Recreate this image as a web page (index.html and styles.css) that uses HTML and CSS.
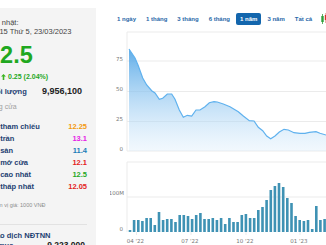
FILE: index.html
```html
<!DOCTYPE html>
<html lang="vi">
<head>
  <meta charset="UTF-8">
  <title>Cổ phiếu</title>
  <link rel="stylesheet" href="styles.css">
</head>
<body>
  <div class="page">
    <aside class="quote">
      <div class="inner">
        <div class="updated">Cập nhật:</div>
        <div class="updated time">14:15 Thứ 5, 23/03/2023</div>

        <div class="price">12.5</div>
        <div class="change">
          <svg class="arrow" width="5" height="6" viewBox="0 0 5 6"><path d="M2.5 0 L5 2.6 L3.3 2.6 L3.3 6 L1.7 6 L1.7 2.6 L0 2.6 Z" fill="#3cb521"/></svg>
          <span>0.25 (2.04%)</span>
        </div>

        <div class="row volume"><span class="label">Khối lượng</span><span class="num">9,956,100</span></div>
        <div class="session">Đóng cửa</div>

        <div class="prices">
          <div class="row"><span class="label">Giá tham chiếu</span><span class="ref">12.25</span></div>
          <div class="row"><span class="label">Giá trần</span><span class="ceil">13.1</span></div>
          <div class="row"><span class="label">Giá sàn</span><span class="floor">11.4</span></div>
          <div class="row"><span class="label">Giá mở cửa</span><span class="down">12.1</span></div>
          <div class="row"><span class="label">Giá cao nhất</span><span class="up">12.5</span></div>
          <div class="row"><span class="label">Giá thấp nhất</span><span class="down">12.05</span></div>
        </div>

        <div class="unit">Đơn vị giá: 1000 VNĐ</div>

        <div class="foreign">
          <div class="title">Giao dịch NĐTNN</div>
          <div class="row"><span class="label">KL mua</span><span class="num">9,223,000</span></div>
        </div>
      </div>
    </aside>

    <section class="chart">
      <div class="tabs">
        <span class="tab">1 ngày</span>
        <span class="tab">1 tháng</span>
        <span class="tab">3 tháng</span>
        <span class="tab">6 tháng</span>
        <span class="tab active">1 năm</span>
        <span class="tab">3 năm</span>
        <span class="tab">Tất cả</span>
        <svg class="candle" width="10" height="12" viewBox="0 0 10 12">
          <line x1="1.5" y1="1" x2="1.5" y2="11" stroke="#2e9e3a" stroke-width="0.8"/>
          <rect x="0.3" y="3" width="2.4" height="6" fill="#2e9e3a"/>
          <line x1="5" y1="0" x2="5" y2="10" stroke="#d9302c" stroke-width="0.8"/>
          <rect x="3.8" y="2" width="2.4" height="5" fill="#d9302c"/>
          <line x1="8.5" y1="2" x2="8.5" y2="12" stroke="#2e9e3a" stroke-width="0.8"/>
          <rect x="7.3" y="4" width="2.4" height="6" fill="#2e9e3a"/>
        </svg>
      </div>

      <svg class="plot" width="216" height="215" viewBox="110 30 216 215">
        <defs>
          <linearGradient id="fill" x1="0" y1="0" x2="0" y2="1">
            <stop offset="0" stop-color="#4ea4e6" stop-opacity="0.9"/>
            <stop offset="1" stop-color="#d9ecfb" stop-opacity="0.35"/>
          </linearGradient>
        </defs>

        <!-- price -->
        <g class="grid">
          <line x1="127" y1="32" x2="326" y2="32"/>
          <line x1="127" y1="61" x2="326" y2="61"/>
          <line x1="127" y1="91.5" x2="326" y2="91.5"/>
          <line x1="127" y1="121.5" x2="326" y2="121.5"/>
          <line x1="127" y1="151" x2="326" y2="151"/>
          <line x1="127" y1="32" x2="127" y2="151"/>
        </g>
        <g class="axis" text-anchor="end">
          <text x="123" y="61">75</text>
          <text x="123" y="90.5">50</text>
          <text x="123" y="121">25</text>
          <text x="123" y="150.5">0</text>
        </g>
        <path fill="url(#fill)" d="M129,49 L135,58 L138,65 L142.7,78 L146.7,85 L151.7,90.7 L155,93 L159.3,99.3 L162.7,98.3 L167.3,94 L171.7,94 L175,99.3 L179.3,110 L183.3,117.3 L187.3,115.3 L191.7,116 L196,110 L200,110 L205,106.7 L209.3,102.7 L214,101.7 L217.3,102 L223.3,104 L230,106.7 L238.3,111.7 L243.3,116 L249.3,120.7 L254,121 L258.3,127.3 L262.7,130.7 L266.7,136 L270.7,138.7 L275,136 L279.3,132 L284,129.3 L288.3,130 L294,132.7 L300,133.3 L305,133.3 L309.3,132.3 L316,131.7 L320,133.3 L326,135 L326,151 L129,151 Z"/>
        <path class="line" d="M129,49 L135,58 L138,65 L142.7,78 L146.7,85 L151.7,90.7 L155,93 L159.3,99.3 L162.7,98.3 L167.3,94 L171.7,94 L175,99.3 L179.3,110 L183.3,117.3 L187.3,115.3 L191.7,116 L196,110 L200,110 L205,106.7 L209.3,102.7 L214,101.7 L217.3,102 L223.3,104 L230,106.7 L238.3,111.7 L243.3,116 L249.3,120.7 L254,121 L258.3,127.3 L262.7,130.7 L266.7,136 L270.7,138.7 L275,136 L279.3,132 L284,129.3 L288.3,130 L294,132.7 L300,133.3 L305,133.3 L309.3,132.3 L316,131.7 L320,133.3 L326,135"/>

        <!-- volume -->
        <g class="grid">
          <line x1="127" y1="162" x2="326" y2="162"/>
          <line x1="127" y1="197" x2="326" y2="197"/>
          <line x1="127" y1="162" x2="127" y2="232"/>
          <line x1="136.5" y1="232" x2="136.5" y2="235"/>
          <line x1="191" y1="232" x2="191" y2="235"/>
          <line x1="246" y1="232" x2="246" y2="235"/>
          <line x1="300" y1="232" x2="300" y2="235"/>
        </g>
        <g class="axis" text-anchor="end">
          <text x="124" y="195">100M</text>
          <text x="123" y="231">0</text>
        </g>
        <g class="axis" text-anchor="middle">
          <text x="135.5" y="243">04 '22</text>
          <text x="190" y="243">07 '22</text>
          <text x="245" y="243">10 '22</text>
          <text x="299" y="243">01 '23</text>
        </g>
        <g class="bars">
          <rect x="128.7" y="230" width="2.6" height="2"/>
          <rect x="132.8" y="220" width="2.6" height="12"/>
          <rect x="137.0" y="220" width="2.6" height="12"/>
          <rect x="141.1" y="221" width="2.6" height="11"/>
          <rect x="145.3" y="218" width="2.6" height="14"/>
          <rect x="149.4" y="218" width="2.6" height="14"/>
          <rect x="153.5" y="225" width="2.6" height="7"/>
          <rect x="157.7" y="212" width="2.6" height="20"/>
          <rect x="161.8" y="220" width="2.6" height="12"/>
          <rect x="165.9" y="219" width="2.6" height="13"/>
          <rect x="170.1" y="219" width="2.6" height="13"/>
          <rect x="174.2" y="222" width="2.6" height="10"/>
          <rect x="178.4" y="215" width="2.6" height="17"/>
          <rect x="182.5" y="215" width="2.6" height="17"/>
          <rect x="186.7" y="216" width="2.6" height="16"/>
          <rect x="190.8" y="219" width="2.6" height="13"/>
          <rect x="194.9" y="215" width="2.6" height="17"/>
          <rect x="199.1" y="213" width="2.6" height="19"/>
          <rect x="203.2" y="219" width="2.6" height="13"/>
          <rect x="207.4" y="219" width="2.6" height="13"/>
          <rect x="211.5" y="218" width="2.6" height="14"/>
          <rect x="215.6" y="220" width="2.6" height="12"/>
          <rect x="219.8" y="218" width="2.6" height="14"/>
          <rect x="223.9" y="224" width="2.6" height="8"/>
          <rect x="228.1" y="218" width="2.6" height="14"/>
          <rect x="232.2" y="222" width="2.6" height="10"/>
          <rect x="236.3" y="222" width="2.6" height="10"/>
          <rect x="240.5" y="215" width="2.6" height="17"/>
          <rect x="244.6" y="214" width="2.6" height="18"/>
          <rect x="248.8" y="218" width="2.6" height="14"/>
          <rect x="252.9" y="218" width="2.6" height="14"/>
          <rect x="257.0" y="210" width="2.6" height="22"/>
          <rect x="261.2" y="207" width="2.6" height="25"/>
          <rect x="265.3" y="200" width="2.6" height="32"/>
          <rect x="269.5" y="190" width="2.6" height="42"/>
          <rect x="273.6" y="186" width="2.6" height="46"/>
          <rect x="277.7" y="183" width="2.6" height="49"/>
          <rect x="281.9" y="187" width="2.6" height="45"/>
          <rect x="286.0" y="198" width="2.6" height="34"/>
          <rect x="290.2" y="203" width="2.6" height="29"/>
          <rect x="294.3" y="216" width="2.6" height="16"/>
          <rect x="298.4" y="220" width="2.6" height="12"/>
          <rect x="302.6" y="221" width="2.6" height="11"/>
          <rect x="306.7" y="220" width="2.6" height="12"/>
          <rect x="310.9" y="229" width="2.6" height="3"/>
          <rect x="315.0" y="206" width="2.6" height="26"/>
          <rect x="319.1" y="220" width="2.6" height="12"/>
          <rect x="323.3" y="219" width="2.6" height="13"/>
        </g>
      </svg>
    </section>
  </div>
</body>
</html>
```

FILE: styles.css
```css
body {
  margin: 0;
  font-family: "Liberation Sans", Arial, sans-serif;
  background-color: #ffffff;
  color: #222;
  overflow: hidden;
}

.page {
  display: flex;
  width: 326px;
  height: 245px;
  overflow: hidden;
}

/* left quote panel */
.quote {
  flex: none;
  width: 96px;
  margin-top: 8px;
  background-color: #f4f4f4;
  overflow: hidden;
}

.inner {
  margin-left: -14px;
  padding: 10px 9px 0 0;
}

.updated {
  font-size: 7.5px;
  line-height: 9px;
  color: #444;
  white-space: nowrap;
}

.updated.time {
  margin-left: 3px;
}

.price {
  margin-top: 8px;
  padding-left: 1px;
  font-size: 23.5px;
  line-height: 23px;
  font-weight: bold;
  color: #1fa81f;
}

.change {
  display: flex;
  align-items: center;
  margin-top: 5px;
  padding-left: 15px;
  height: 9px;
  font-size: 7px;
  font-weight: bold;
  color: #1fa81f;
}

.change .arrow {
  margin-right: 2px;
}

.row {
  display: flex;
  justify-content: space-between;
  align-items: baseline;
  font-size: 7.5px;
  font-weight: bold;
  line-height: 12px;
  white-space: nowrap;
}

.row .label {
  color: #1d3f72;
}

.row.volume {
  margin-top: 4px;
}

.row .num {
  color: #222;
}

.row.volume .num {
  margin-right: 5px;
  font-size: 9px;
}

.session {
  margin-top: 4px;
  font-size: 7px;
  line-height: 9px;
  color: #a0a0a0;
}

.prices {
  margin-top: 10px;
}

.ref { color: #f39a0f; }
.ceil { color: #e61ee6; }
.floor { color: #1a7db8; }
.down { color: #e31d1d; }
.up { color: #1fa81f; }

.unit {
  margin-top: 8px;
  padding-left: 6px;
  font-size: 5.5px;
  line-height: 8px;
  color: #8c8c8c;
}

.foreign {
  margin-top: 15px;
  padding-top: 6px;
  border-top: 1px solid #e2e2e2;
}

.foreign .title {
  padding-left: 2px;
  font-size: 7.5px;
  font-weight: bold;
  line-height: 9px;
  color: #1d3f72;
}

.foreign .row {
  line-height: 10px;
}

.foreign .row .num {
  margin-right: 2px;
  font-size: 8.5px;
}

/* right chart */
.chart {
  flex: none;
  width: 216px;
  margin-left: 14px;
}

.tabs {
  display: flex;
  align-items: center;
  gap: 2px;
  height: 13px;
  margin-top: 12px;
  margin-bottom: 5px;
  padding-left: 3px;
  white-space: nowrap;
}

.tab {
  padding: 0 4px;
  font-size: 6px;
  font-weight: bold;
  line-height: 12px;
  color: #2a68a8;
  border-radius: 2px;
}

.tab.active {
  background-color: #1366ad;
  color: #fff;
}

.candle {
  flex: none;
  margin-left: 3px;
}

.plot {
  display: block;
}

.grid line {
  stroke: #ebebeb;
  stroke-width: 1;
}

.axis text {
  font-family: "DejaVu Sans", sans-serif;
  font-size: 5.5px;
  fill: #777;
}

.line {
  fill: none;
  stroke: #5fb1ee;
  stroke-width: 1.2;
}

.bars rect {
  fill: #3f92b4;
}
```
